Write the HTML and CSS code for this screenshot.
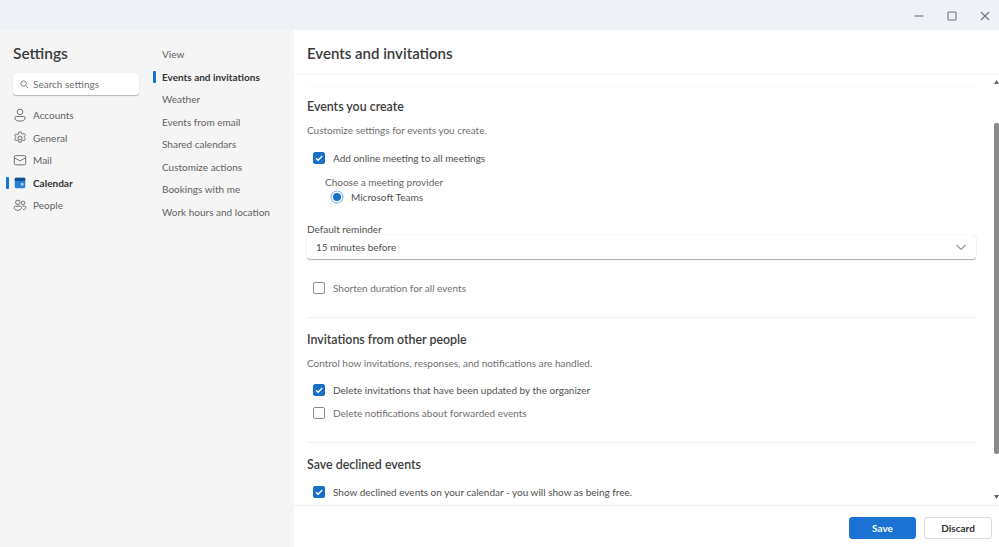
FILE: index.html
```html
<!DOCTYPE html>
<html lang="en">
<head>
<meta charset="utf-8">
<title>Settings</title>
<link rel="stylesheet" href="styles.css">
</head>
<body>
<div class="app">
  <header class="titlebar">
    <svg class="win" width="12" height="12" viewBox="0 0 12 12"><path d="M1.500 6h9" stroke="#6b7278" stroke-width="1.100" fill="none"/></svg>
    <svg class="win" width="12" height="12" viewBox="0 0 12 12"><rect x="2" y="2" width="8" height="8" rx="1" stroke="#6b7278" stroke-width="1.100" fill="none"/></svg>
    <svg class="win" width="12" height="12" viewBox="0 0 12 12"><path d="M2 2l8 8M10 2l-8 8" stroke="#6b7278" stroke-width="1.100" fill="none"/></svg>
  </header>
  <div class="main">
    <aside class="side">
      <div class="col-nav">
        <h1 class="settings">Settings</h1>
        <div class="search">
          <svg width="9" height="9" viewBox="0 0 10 10"><circle cx="4" cy="4" r="3" stroke="#777" fill="none"/><path d="M6.300 6.300L9 9" stroke="#777" fill="none"/></svg>
          <span>Search settings</span>
        </div>
        <nav class="nav">
          <div class="nav-item">
            <svg viewBox="0 0 16 16" fill="none" stroke="#616161"><circle cx="8" cy="4.500" r="3.200"/><path d="M3.700 9.700h8.600c.9 0 1.700.7 1.700 1.600 0 2.200-2.600 3.700-6 3.700s-6-1.500-6-3.700c0-.9.8-1.600 1.700-1.600z"/></svg>
            <span>Accounts</span>
          </div>
          <div class="nav-item">
            <svg viewBox="0 0 16 16" fill="none" stroke="#616161"><circle cx="8" cy="8" r="2.200"/><path d="M6.600 1.200h2.800l.4 1.900 1.300.6 1.700-.9 1.400 2.300-1.400 1.300v1.200l1.400 1.300-1.400 2.300-1.700-.9-1.300.6-.4 1.900H6.600l-.4-1.900-1.300-.6-1.700.9-1.400-2.300 1.400-1.300V6.900L1.800 5.600l1.400-2.300 1.700.9 1.300-.6z" stroke-linejoin="round"/></svg>
            <span>General</span>
          </div>
          <div class="nav-item">
            <svg viewBox="0 0 16 16" fill="none" stroke="#616161"><rect x="1.500" y="3" width="13" height="10.500" rx="1.600"/><path d="M1.700 5.600L8 9l6.300-3.400"/></svg>
            <span>Mail</span>
          </div>
          <div class="nav-item active">
            <svg viewBox="0 0 16 16"><rect x="2" y="2" width="12" height="12" rx="1.600" fill="#2a7fd8"/><rect x="2" y="2" width="12" height="3.600" rx="1" fill="#12518f"/><rect x="9" y="8" width="3" height="3" fill="#a8cdf0"/></svg>
            <span>Calendar</span>
          </div>
          <div class="nav-item">
            <svg viewBox="0 0 16 16" fill="none" stroke="#616161"><circle cx="5.500" cy="5" r="2.600"/><circle cx="11.600" cy="5.600" r="2"/><path d="M1.200 11c0-1 .7-1.600 1.600-1.600h5.400c.9 0 1.600.6 1.600 1.600 0 1.900-1.900 3-4.300 3s-4.300-1.100-4.300-3z"/><path d="M10.600 9.400h2.600c.9 0 1.600.6 1.600 1.500 0 1.500-1.300 2.400-3.300 2.400"/></svg>
            <span>People</span>
          </div>
        </nav>
      </div>
      <nav class="col-sub">
        <div class="sub-item">View</div>
        <div class="sub-item active">Events and invitations</div>
        <div class="sub-item">Weather</div>
        <div class="sub-item">Events from email</div>
        <div class="sub-item">Shared calendars</div>
        <div class="sub-item">Customize actions</div>
        <div class="sub-item">Bookings with me</div>
        <div class="sub-item">Work hours and location</div>
      </nav>
    </aside>
    <section class="content">
      <h2 class="page-title">Events and invitations</h2>
      <div class="scroll-area">
        <div class="form">
          <section class="group first">
            <h3>Events you create</h3>
            <p class="desc">Customize settings for events you create.</p>
            <label class="check row-a"><span class="box on"><svg width="10" height="10" viewBox="0 0 10 10"><path d="M2 5.200l2.100 2.100L8.200 3" stroke="#fff" stroke-width="1.300" fill="none"/></svg></span>Add online meeting to all meetings</label>
            <div class="provider">
              <div class="provider-label">Choose a meeting provider</div>
              <label class="radio"><span class="dot"></span>Microsoft Teams</label>
            </div>
            <div class="field-label">Default reminder</div>
            <div class="select"><span>15 minutes before</span>
              <svg width="12" height="12" viewBox="0 0 12 12"><path d="M1.500 4l4.500 4.500L10.500 4" stroke="#555" fill="none"/></svg>
            </div>
            <label class="check row-b"><span class="box"></span>Shorten duration for all events</label>
          </section>
          <section class="group second">
            <h3>Invitations from other people</h3>
            <p class="desc">Control how invitations, responses, and notifications are handled.</p>
            <label class="check row-c"><span class="box on"><svg width="10" height="10" viewBox="0 0 10 10"><path d="M2 5.200l2.100 2.100L8.200 3" stroke="#fff" stroke-width="1.300" fill="none"/></svg></span>Delete invitations that have been updated by the organizer</label>
            <label class="check row-d"><span class="box"></span>Delete notifications about forwarded events</label>
          </section>
          <section class="group third">
            <h3>Save declined events</h3>
            <label class="check row-e"><span class="box on"><svg width="10" height="10" viewBox="0 0 10 10"><path d="M2 5.200l2.100 2.100L8.200 3" stroke="#fff" stroke-width="1.300" fill="none"/></svg></span>Show declined events on your calendar - you will show as being free.</label>
          </section>
        </div>
        <div class="scrollbar">
          <svg class="arrow" width="5" height="4" viewBox="0 0 5 4"><path d="M2.500 0L5 4H0z" fill="#666"/></svg>
          <div class="track"><div class="thumb"></div></div>
          <svg class="arrow" width="5" height="4" viewBox="0 0 5 4"><path d="M0 0h5L2.500 4z" fill="#666"/></svg>
        </div>
      </div>
      <footer class="actions">
        <button class="btn primary">Save</button>
        <button class="btn ghost">Discard</button>
      </footer>
    </section>
  </div>
</div>
</body>
</html>
```
FILE: styles.css
```css
* { box-sizing: border-box; }
html, body { margin: 0; height: 100%; }
body { font-family: "Lato", "Open Sans", sans-serif; color: #424242; font-size: 10px; overflow: hidden; background: #fff; }
.app { width: 999px; height: 547px; display: flex; flex-direction: column; }
.titlebar { height: 30px; background: #eef2f6; display: flex; justify-content: flex-end; align-items: center; gap: 21px; padding: 1px 8px 0 0; flex: none; }
.main { flex: 1; display: flex; min-height: 0; }
.side { width: 294px; background: #f5f5f5; display: flex; flex: none; }
.col-nav { width: 153px; padding: 13px 14px 0 13px; flex: none; }
.settings { margin: 0; font-size: 15.500px; line-height: 20px; font-weight: 600; color: #3a3a3a; }
.search { margin-top: 10px; height: 22px; width: 126px; background: #fff; border-radius: 3px; box-shadow: 0 1px 1px rgba(0,0,0,.25), 0 0 1px rgba(0,0,0,.15); display: flex; align-items: center; gap: 4px; padding-left: 7px; color: #707070; }
.nav { margin-top: 9px; margin-left: -13px; display: flex; flex-direction: column; }
.nav-item { height: 22.500px; display: flex; align-items: center; gap: 6px; padding-left: 13px; color: #616161; position: relative; }
.nav-item svg { flex: none; width: 14px; height: 14px; }
.nav-item.active { color: #333; font-weight: 700; }
.nav-item.active::before { content: ""; position: absolute; left: 6px; top: 5px; width: 2.500px; height: 12px; background: #1a73d2; border-radius: 1px; }
.col-sub { padding-top: 13.400px; flex: 1; display: flex; flex-direction: column; }
.sub-item { height: 22.500px; line-height: 22.500px; padding-left: 9px; color: #616161; position: relative; white-space: nowrap; }
.sub-item.active { color: #333; font-weight: 700; }
.sub-item.active::before { content: ""; position: absolute; left: 0; top: 5px; width: 2.500px; height: 12px; background: #1a73d2; border-radius: 1px; }
.content { flex: 1; display: flex; flex-direction: column; min-width: 0; }
.page-title { margin: 0; flex: none; height: 45px; padding: 13px 0 0 13px; font-size: 15px; line-height: 20px; font-weight: 600; color: #3a3a3a; border-bottom: 1px solid #f3f3f3; }
.scroll-area { flex: 1; display: flex; min-height: 0; border-bottom: 1px solid #f0f0f0; overflow: hidden; }
.form { flex: 1; padding-left: 13px; overflow: hidden; min-width: 0; }
.group { width: 669px; }
.group.first { border-top: 1px solid #f8f8f8; margin-top: 11px; padding-top: 11px; height: 232px; border-bottom: 1px solid #f0f0f0; }
.group.second { height: 125px; padding-top: 13px; border-bottom: 1px solid #f0f0f0; }
.group.third { padding-top: 13px; }
h3 { margin: 0; font-size: 12.400px; line-height: 18px; font-weight: 600; color: #3d3d3d; }
.desc { margin: 6px 0 0; line-height: 16px; color: #707070; }
.check { display: flex; align-items: center; gap: 8px; line-height: 16px; color: #505050; margin-left: 6px; }
.box { width: 12px; height: 12px; border: 1px solid #8a8a8a; border-radius: 2px; background: #fff; display: flex; align-items: center; justify-content: center; flex: none; }
.box.on { background: #1a6fc9; border-color: #1a6fc9; }
.row-a { margin-top: 12px; }
.provider { margin: 8px 0 0 18px; }
.provider-label { line-height: 16px; color: #666; }
.radio { display: flex; align-items: center; gap: 10px; margin: -1px 0 0 7px; line-height: 16px; color: #505050; }
.dot { width: 8px; height: 8px; border-radius: 50%; background: #1a6fc9; box-shadow: 0 0 0 1.500px #fff, 0 0 0 2.500px #7fb2e5; margin: 0 0 0 1px; }
.field-label { margin-top: 16px; line-height: 16px; color: #505050; }
.select { margin-top: -2px; height: 24px; background: #fff; border-radius: 3px; box-shadow: 0 1px 1px rgba(0,0,0,.3), 0 0 1px rgba(0,0,0,.2); display: flex; align-items: center; justify-content: space-between; padding: 0 9px; color: #505050; }
.row-b { margin-top: 21px; color: #707070; }
.row-c { margin-top: 11px; }
.row-d { margin-top: 6.500px; color: #707070; }
.row-e { margin-top: 10px; }
.scrollbar { width: 5px; flex: none; display: flex; flex-direction: column; align-items: center; padding-bottom: 6px; }
.arrow { flex: none; margin-top: 5px; }
.track { flex: 1; padding-top: 39px; padding-bottom: 36px; display: flex; width: 100%; }
.thumb { width: 4px; background: #8a8a8a; border-radius: 2px; flex: 1; }
.actions { flex: none; height: 41px; display: flex; justify-content: flex-end; gap: 8px; padding: 11px 7px 0 0; }
.btn { width: 67px; height: 22px; border: 1px solid #dedede; border-radius: 3px; background: #fff; font: 700 10px "Lato", sans-serif; color: #333; padding: 0; }
.btn.ghost { width: 68px; }
.btn.primary { background: #1a73d2; border-color: #1a73d2; color: #fff; }
```
